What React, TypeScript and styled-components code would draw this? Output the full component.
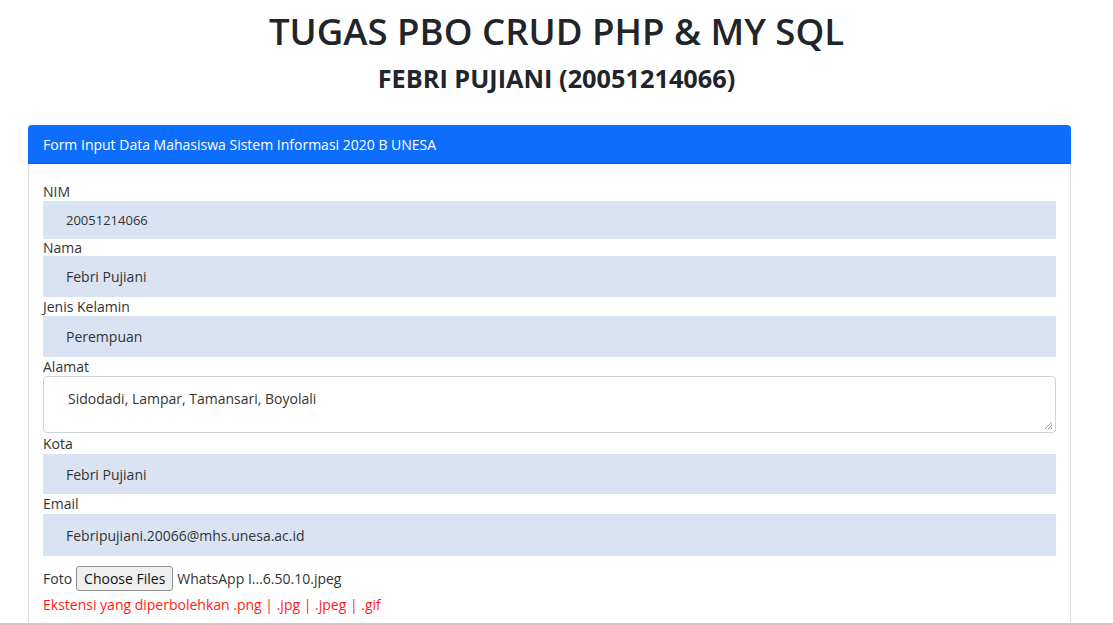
import styled, { createGlobalStyle } from 'styled-components';

const GlobalStyle = createGlobalStyle`
  * {
    box-sizing: border-box;
  }
  body {
    margin: 0;
    background: #fff;
    font-family: 'Open Sans', 'Liberation Sans', sans-serif;
    color: #212529;
  }
`;

const Viewport = styled.div`
  height: 625px;
  overflow: hidden;
  border-bottom: 2px solid #dcc4cd;
`;

const Heading = styled.h1`
  margin: 0;
  padding-top: 9px;
  text-align: center;
  font-size: 36.6px;
  line-height: 45px;
  font-weight: 600;
  color: #212529;
`;

const SubHeading = styled.h3`
  margin: 8px 0 0;
  text-align: center;
  font-size: 25.3px;
  line-height: 32px;
  font-weight: 700;
  color: #212529;
`;

const Card = styled.div`
  margin: 31px 42px 0 28px;
  border: 1px solid #dcdcdc;
  border-radius: 4px 4px 0 0;
`;

const CardHeader = styled.div`
  height: 39px;
  margin: -1px -1px 0;
  padding: 0 15px;
  display: flex;
  align-items: center;
  background-color: #0d6efd;
  border-bottom: 1px solid #0b5ed7;
  border-radius: 4px 4px 0 0;
  color: #fff;
  font-size: 14px;
`;

const CardBody = styled.div`
  padding: 18px 14px 20px;
  display: flex;
  flex-direction: column;
`;

const Label = styled.label<{ h: number }>`
  display: block;
  font-size: 14px;
  line-height: ${({ h }) => h}px;
  color: #333;
`;

const Input = styled.div<{ h: number; small?: boolean }>`
  height: ${({ h }) => h}px;
  padding-left: 23px;
  display: flex;
  align-items: center;
  background-color: #dae3f3;
  font-size: ${({ small }) => (small ? 13 : 14)}px;
  color: #333;
`;

const TextArea = styled.div`
  height: 57px;
  padding: 12px 24px 0;
  border: 1px solid #ced4da;
  border-radius: 4px;
  background: #fff;
  font-size: 14px;
  color: #333;
  position: relative;
`;

const Grip = styled.svg`
  position: absolute;
  right: 2px;
  bottom: 2px;
`;

const FileRow = styled.div`
  margin-top: 10px;
  display: flex;
  align-items: center;
  gap: 4px;
  font-size: 14px;
  color: #333;
`;

const FileButton = styled.button`
  height: 25px;
  padding: 0 7px;
  border: 1px solid #8f8f8f;
  border-radius: 3px;
  background: #efefef;
  font-family: inherit;
  font-size: 14px;
  color: #111;
`;

const Note = styled.div`
  margin-top: 4px;
  font-size: 14px;
  line-height: 19px;
  color: #ff1a1a;
`;

const fields: { label: string; value: string; h: number; lh: number; small?: boolean }[] = [
  { label: 'NIM', value: '20051214066', h: 38, lh: 19, small: true },
  { label: 'Nama', value: 'Febri Pujiani', h: 41, lh: 17 },
  { label: 'Jenis Kelamin', value: 'Perempuan', h: 41, lh: 19 },
];

export default function App() {
  return (
    <Viewport>
      <GlobalStyle />
      <Heading>TUGAS PBO CRUD PHP &amp; MY SQL</Heading>
      <SubHeading>FEBRI PUJIANI (20051214066)</SubHeading>
      <Card>
        <CardHeader>Form Input Data Mahasiswa Sistem Informasi 2020 B UNESA</CardHeader>
        <CardBody>
          {fields.map((f) => (
            <div key={f.label}>
              <Label h={f.lh}>{f.label}</Label>
              <Input h={f.h} small={f.small}>
                {f.value}
              </Input>
            </div>
          ))}
          <Label h={19}>Alamat</Label>
          <TextArea>
            Sidodadi, Lampar, Tamansari, Boyolali
            <Grip width="9" height="9" viewBox="0 0 9 9">
              <path d="M8 1L1 8M8 4L4 8M8 7L7 8" stroke="#999" strokeWidth="1" />
            </Grip>
          </TextArea>
          <Label h={21}>Kota</Label>
          <Input h={40}>Febri Pujiani</Input>
          <Label h={20}>Email</Label>
          <Input h={42}>Febripujiani.20066@mhs.unesa.ac.id</Input>
          <FileRow>
            Foto
            <FileButton>Choose Files</FileButton>
            WhatsApp I...6.50.10.jpeg
          </FileRow>
          <Note>Ekstensi yang diperbolehkan .png | .jpg | .jpeg | .gif</Note>
        </CardBody>
      </Card>
    </Viewport>
  );
}
